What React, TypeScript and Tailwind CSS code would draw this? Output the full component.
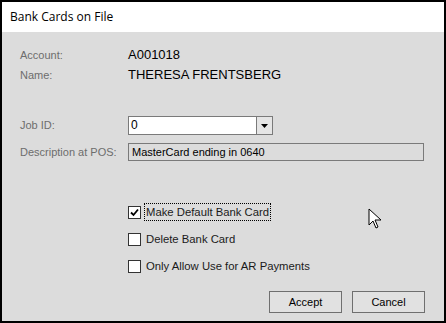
const checks = [
  { label: "Make Default Bank Card", checked: true, focus: true },
  { label: "Delete Bank Card", checked: false, focus: false },
  { label: "Only Allow Use for AR Payments", checked: false, focus: false },
]

export default function App() {
  return (
    <div className="w-[446px] h-[323px] bg-black p-[2px] font-['Liberation_Sans',Arial,sans-serif]">
      <div className="w-full h-full flex flex-col">
        {/* Title bar */}
        <div className="h-[30px] bg-white flex items-center pl-[8px] text-[12px] text-black font-['Open_Sans',sans-serif]">
          Bank Cards on File
        </div>

        {/* Body */}
        <div className="relative flex-1 bg-[#dcdcdc] pl-[18px] pt-[14px]">
          <div className="flex items-center h-[18px] text-[11px] text-[#6d6d6d]">
            <span className="w-[108px]">Account:</span>
            <span className="text-[13px] text-black">A001018</span>
          </div>
          <div className="flex items-center h-[18px] mt-[2px] text-[11px] text-[#6d6d6d]">
            <span className="w-[108px]">Name:</span>
            <span className="text-[13px] text-black">THERESA FRENTSBERG</span>
          </div>

          <div className="flex items-center h-[19px] mt-[32px] text-[11px] text-[#6d6d6d]">
            <span className="w-[108px]">Job ID:</span>
            <div className="flex w-[145px] h-[19px] border border-[#7a7a7a] bg-white">
              <span className="flex-1 pl-[2px] text-[12px] text-black leading-[17px]">0</span>
              <div className="w-[16px] h-full border-l border-[#7a7a7a] bg-[#e5e5e5] flex items-center justify-center">
                <svg width="7" height="4" viewBox="0 0 7 4">
                  <path d="M0 0h7L3.5 4z" fill="#000" />
                </svg>
              </div>
            </div>
          </div>
          <div className="flex items-center h-[18px] mt-[8px] text-[11px] text-[#6d6d6d]">
            <span className="w-[108px]">Description at POS:</span>
            <div className="w-[296px] h-[18px] border border-[#7a7a7a] bg-[#dcdcdc] pl-[3px] text-[11px] text-black leading-[16px]">
              MasterCard ending in 0640
            </div>
          </div>

          <div className="flex flex-col gap-[13px] mt-[44px] ml-[108px]">
            {checks.map((c) => (
              <div key={c.label} className="flex items-center h-[14px] text-[11.3px] text-[#1a1a1a]">
                <div className="w-[13px] h-[13px] border border-[#333] bg-white flex items-center justify-center">
                  {c.checked && (
                    <svg width="9" height="9" viewBox="0 0 9 9">
                      <path d="M1 4.5l2.5 2.5L8 1.5" fill="none" stroke="#000" strokeWidth="1.8" />
                    </svg>
                  )}
                </div>
                <span
                  className={`ml-[4px] px-[1px] ${c.focus ? "outline outline-1 outline-dotted outline-black" : ""}`}
                >
                  {c.label}
                </span>
              </div>
            ))}
          </div>

          {/* Buttons */}
          <div className="absolute right-[19px] bottom-[8px] flex gap-[10px]">
            <button className="w-[73px] h-[22px] border border-[#6f6f6f] bg-[#e1e1e1] text-[11px] text-black">
              Accept
            </button>
            <button className="w-[73px] h-[22px] border border-[#6f6f6f] bg-[#e1e1e1] text-[11px] text-black">
              Cancel
            </button>
          </div>

          {/* Mouse pointer */}
          <svg className="absolute left-[366px] top-[176px]" width="14" height="22" viewBox="0 0 14 22">
            <path
              d="M1 1v16l4-4 3 7 2-1-3-7h6z"
              fill="#fff"
              stroke="#000"
              strokeWidth="1"
              strokeLinejoin="round"
            />
          </svg>
        </div>
      </div>
    </div>
  )
}
